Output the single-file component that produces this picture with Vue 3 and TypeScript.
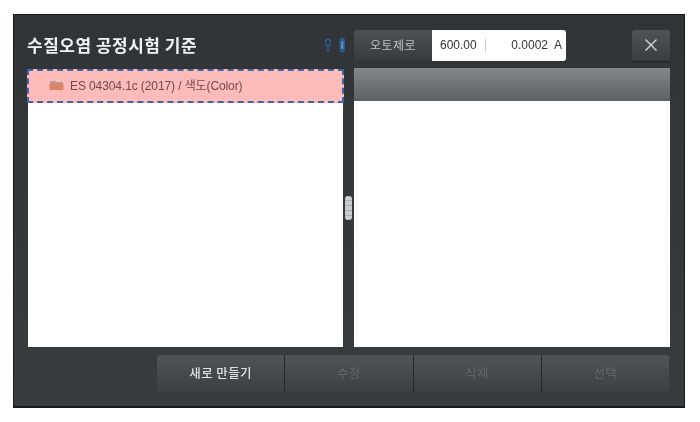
<script setup lang="ts">
const actions = [
  { label: '새로 만들기', on: true },
  { label: '수정', on: false },
  { label: '삭제', on: false },
  { label: '선택', on: false },
]
</script>

<template>
  <div class="page">
    <section class="panel">
      <header class="top">
        <h1 class="title">수질오염 공정시험 기준</h1>
        <div class="status">
          <svg class="plug" width="24" height="18" viewBox="0 0 24 18" aria-hidden="true">
            <g fill="none" stroke="#2c5f96" stroke-width="1.5" opacity=".85">
              <ellipse cx="6" cy="6.5" rx="2.6" ry="3.2" />
              <path d="M6 9.5v4M4 15h4" />
            </g>
            <rect x="17.5" y="1.5" width="5.5" height="15" rx="2.7" fill="#2a5a92" />
            <rect x="19.3" y="5" width="1.9" height="8" rx=".9" fill="#6596c0" />
          </svg>
          <div class="zero">오토제로</div>
          <div class="readout">
            <span class="wave">600.00</span>
            <span class="sep"></span>
            <span class="abs">0.0002</span>
            <span class="unit">A</span>
          </div>
        </div>
        <button class="close" aria-label="닫기">
          <svg width="14" height="14" viewBox="0 0 14 14" aria-hidden="true">
            <path d="M1.5 1.5l11 11M12.5 1.5l-11 11" stroke="#d4d7d9" stroke-width="1.4" fill="none" />
          </svg>
        </button>
      </header>

      <div class="lists">
        <div class="list left">
          <div class="row">
            <svg class="folder" width="15" height="12" viewBox="0 0 15 12" aria-hidden="true">
              <path d="M1 3V2h5l1 1h7v2H1z" fill="#b89a94" />
              <rect x=".5" y="4.5" width="14" height="6.5" rx="1" fill="#dd8468" />
            </svg>
            <span>ES 04304.1c (2017) / 색도(Color)</span>
          </div>
        </div>
        <div class="splitter"><span class="grip"></span></div>
        <div class="list right">
          <div class="list-head"></div>
        </div>
      </div>

      <footer class="actions">
        <button v-for="a in actions" :key="a.label" class="action" :class="{ on: a.on }">{{ a.label }}</button>
      </footer>
    </section>
  </div>
</template>

<style>
html, body { margin: 0; background: #fff; }
</style>

<style scoped>
.page {
  width: 700px;
  height: 422px;
  box-sizing: border-box;
  padding: 14px 15px 14px 13px;
  background: #fff;
  font-family: "Liberation Sans", "Noto Sans CJK KR", sans-serif;
}
.panel {
  height: 100%;
  box-sizing: border-box;
  display: flex;
  flex-direction: column;
  border: 1px solid #17191a;
  border-bottom-width: 2px;
  background: linear-gradient(#303437, #383c3f);
  padding: 0 14px;
  filter: blur(.45px);
}
.top {
  height: 53px;
  flex: none;
  display: flex;
  align-items: center;
  padding-top: 7px;
  box-sizing: border-box;
}
.title {
  margin: 0 0 2px -1px;
  font-size: 17px;
  font-weight: 700;
  color: #f2f3f3;
  letter-spacing: .5px;
  font-family: "Noto Sans CJK KR", sans-serif;
}
.status {
  margin-left: auto;
  display: flex;
  align-items: center;
  height: 31px;
}
.plug { margin-right: 8px; }
.zero {
  width: 78px;
  height: 31px;
  box-sizing: border-box;
  padding-bottom: 2px;
  display: flex;
  align-items: center;
  justify-content: center;
  border-radius: 3px 0 0 3px;
  background: linear-gradient(#4d5154, #383b3e);
  color: #bfc2c3;
  font-size: 12px;
  letter-spacing: .5px;
  font-family: "Noto Sans CJK KR", sans-serif;
}
.readout {
  width: 134px;
  height: 31px;
  box-sizing: border-box;
  padding: 0 4px 0 8px;
  display: flex;
  align-items: center;
  background: #fff;
  border-radius: 0 3px 3px 0;
  color: #333;
  font-size: 12px;
}
.sep {
  width: 1px;
  height: 13px;
  margin-left: 8px;
  background: #c8c8c8;
}
.abs { margin-left: auto; }
.unit { margin-left: 6px; font-size: 12px; }
.close {
  margin-left: 66px;
  width: 38px;
  height: 31px;
  padding: 0;
  border: 0;
  border-radius: 3px;
  background: linear-gradient(#505457, #3a3d40);
  box-shadow: 0 1px 1px #222;
  display: flex;
  align-items: center;
  justify-content: center;
}
.lists {
  height: 279px;
  flex: none;
  display: flex;
}
.list {
  background: #fff;
  box-sizing: border-box;
}
.left {
  width: 315px;
  margin-top: 2px;
  height: 277px;
}
.right {
  width: 316px;
  display: flex;
  flex-direction: column;
}
.splitter {
  width: 11px;
  flex: none;
  display: flex;
  align-items: center;
  justify-content: center;
}
.grip {
  width: 7px;
  height: 24px;
  border-radius: 3px;
  background: repeating-linear-gradient(#c9cccd 0 4px, #a9adaf 4px 5px);
}
.row {
  height: 34px;
  box-sizing: border-box;
  margin: -1px 0 0 -1px;
  width: 317px;
  border: 2px dashed #3f65a8;
  background: #fdbcb9;
  display: flex;
  align-items: center;
  padding: 0 0 3px 20px;
  gap: 6px;
  font-size: 12px;
  color: #71494b;
}
.row span { letter-spacing: -.1px; }
.list-head {
  height: 33px;
  flex: none;
  background: linear-gradient(#83878a, #5e6164);
}
.actions {
  margin-top: 8px;
  margin-left: 129px;
  height: 38px;
  display: grid;
  grid-template-columns: repeat(4, 1fr);
  gap: 1px;
  width: 512px;
  background: #26292b;
  border-radius: 3px;
}
.action {
  padding: 0 0 3px;
  border: 0;
  background: linear-gradient(#505457, #3c3f42);
  color: #63676a;
  font-size: 12.5px;
  font-family: "Noto Sans CJK KR", sans-serif;
  letter-spacing: .4px;
}
.action.on { color: #dfe1e2; font-weight: 500; }
.action:first-child { border-radius: 3px 0 0 3px; }
.action:last-child { border-radius: 0 3px 3px 0; }
</style>
